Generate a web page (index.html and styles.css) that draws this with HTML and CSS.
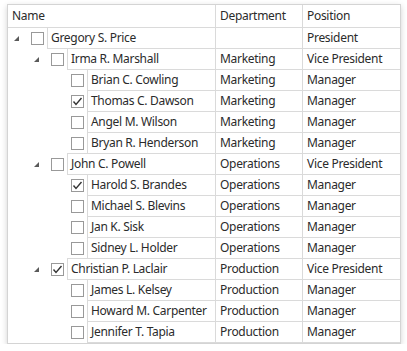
FILE: index.html
```html
<!DOCTYPE html>
<html lang="en">
<head>
    <meta charset="UTF-8">
    <meta name="viewport" content="width=device-width, initial-scale=1.0">
    <title>Employees Tree</title>
    <link rel="stylesheet" href="styles.css">
</head>
<body>
    <div class="grid">
        <div class="header">
            <div class="hcell">Name</div>
            <div class="hcell">Department</div>
            <div class="hcell last">Position</div>
        </div>
        <div id="rows"></div>
    </div>

    <script>
        const employees = [
            { name: 'Gregory S. Price', dept: '', pos: 'President', level: 0, parent: true, checked: false },
            { name: 'Irma R. Marshall', dept: 'Marketing', pos: 'Vice President', level: 1, parent: true, checked: false },
            { name: 'Brian C. Cowling', dept: 'Marketing', pos: 'Manager', level: 2, checked: false },
            { name: 'Thomas C. Dawson', dept: 'Marketing', pos: 'Manager', level: 2, checked: true },
            { name: 'Angel M. Wilson', dept: 'Marketing', pos: 'Manager', level: 2, checked: false },
            { name: 'Bryan R. Henderson', dept: 'Marketing', pos: 'Manager', level: 2, checked: false },
            { name: 'John C. Powell', dept: 'Operations', pos: 'Vice President', level: 1, parent: true, checked: false },
            { name: 'Harold S. Brandes', dept: 'Operations', pos: 'Manager', level: 2, checked: true },
            { name: 'Michael S. Blevins', dept: 'Operations', pos: 'Manager', level: 2, checked: false },
            { name: 'Jan K. Sisk', dept: 'Operations', pos: 'Manager', level: 2, checked: false },
            { name: 'Sidney L. Holder', dept: 'Operations', pos: 'Manager', level: 2, checked: false },
            { name: 'Christian P. Laclair', dept: 'Production', pos: 'Vice President', level: 1, parent: true, checked: true },
            { name: 'James L. Kelsey', dept: 'Production', pos: 'Manager', level: 2, checked: false },
            { name: 'Howard M. Carpenter', dept: 'Production', pos: 'Manager', level: 2, checked: false },
            { name: 'Jennifer T. Tapia', dept: 'Production', pos: 'Manager', level: 2, checked: false }
        ];

        const expanderIcon = '<svg width="5" height="5" viewBox="0 0 5 5"><polygon points="5,0 5,5 0,5" fill="#5a5a5a"/></svg>';
        const checkIcon = '<svg width="11" height="11" viewBox="0 0 11 11"><polyline points="1.5,5.5 4,8.5 9.5,2" fill="none" stroke="#333" stroke-width="1.4"/></svg>';

        function renderRows() {
            const container = document.getElementById('rows');
            employees.forEach(emp => {
                const row = document.createElement('div');
                row.className = 'row';
                row.innerHTML = `
                    <div class="name-col" style="padding-left: ${emp.level * 20}px">
                        <span class="expander">${emp.parent ? expanderIcon : ''}</span>
                        <span class="check">${emp.checked ? checkIcon : ''}</span>
                        <div class="cell name-cell">${emp.name}</div>
                    </div>
                    <div class="cell">${emp.dept}</div>
                    <div class="cell last">${emp.pos}</div>
                `;
                container.appendChild(row);
            });
        }

        renderRows();
    </script>
</body>
</html>
```

FILE: styles.css
```css
body {
    margin: 0;
    background: white;
    font-family: "Noto Sans", sans-serif;
    font-size: 12px;
    letter-spacing: -0.3px;
    color: #2b2b2b;
}

.grid {
    box-sizing: border-box;
    width: 394px;
    margin: 4px 0 0 7px;
    background: white;
    border: 1px solid #d4d4d4;
    box-shadow: 0 2px 6px rgba(0, 0, 0, 0.18);
}

.header, .row {
    display: grid;
    grid-template-columns: 208px 87px 1fr;
}

.header {
    box-sizing: border-box;
    height: 23px;
    border-bottom: 1px solid #dadada;
}

.hcell {
    padding-left: 4px;
    line-height: 22px;
    border-right: 1px solid #dadada;
}

.row {
    height: 21px;
}

.name-col {
    display: flex;
    align-items: center;
}

.expander {
    width: 20px;
    height: 5px;
    flex-shrink: 0;
}

.expander svg {
    display: block;
    margin-left: 6px;
}

.check {
    box-sizing: border-box;
    width: 13px;
    height: 13px;
    margin: 0 3px;
    flex-shrink: 0;
    border: 1px solid #999;
    background: white;
}

.check svg {
    display: block;
}

.cell {
    box-sizing: border-box;
    height: 21px;
    padding-left: 4px;
    line-height: 20px;
    white-space: nowrap;
    overflow: hidden;
    border-right: 1px solid #dadada;
    border-bottom: 1px solid #dadada;
}

.name-cell {
    flex: 1;
    align-self: stretch;
    padding-left: 3px;
    border-left: 1px solid #dadada;
    box-shadow: 0 -1px 0 #dadada;
}

.last {
    border-right: none;
}
```
